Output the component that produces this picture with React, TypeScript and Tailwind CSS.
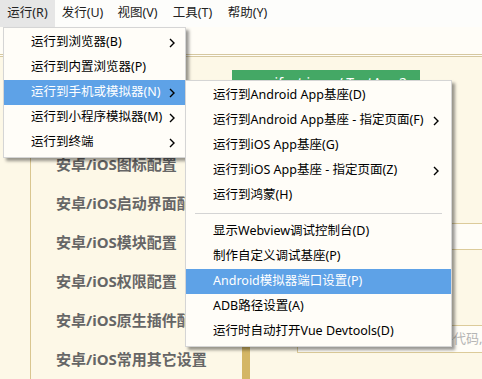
import React from "react";

const FONT = "font-['Noto_Sans','Noto_Sans_CJK_SC',sans-serif]";

function Chevron() {
  return (
    <svg width="6" height="10" viewBox="0 0 6 10" className="text-black">
      <path d="M1 1l4 4-4 4" fill="none" stroke="currentColor" strokeWidth="1.4" />
    </svg>
  );
}

type Item = { label: string; sub?: boolean; active?: boolean; sep?: boolean };

const runMenu: Item[] = [
  { label: "运行到浏览器(B)", sub: true },
  { label: "运行到内置浏览器(P)" },
  { label: "运行到手机或模拟器(N)", sub: true, active: true },
  { label: "运行到小程序模拟器(M)", sub: true },
  { label: "运行到终端", sub: true },
];

const phoneMenu: Item[] = [
  { label: "运行到Android App基座(D)" },
  { label: "运行到Android App基座 - 指定页面(F)", sub: true },
  { label: "运行到iOS App基座(G)" },
  { label: "运行到iOS App基座 - 指定页面(Z)", sub: true },
  { label: "运行到鸿蒙(H)" },
  { label: "", sep: true },
  { label: "显示Webview调试控制台(D)" },
  { label: "制作自定义调试基座(P)" },
  { label: "Android模拟器端口设置(P)", active: true },
  { label: "ADB路径设置(A)" },
  { label: "运行时自动打开Vue Devtools(D)" },
];

const sideItems = [
  "安卓/iOS图标配置",
  "安卓/iOS启动界面配置",
  "安卓/iOS模块配置",
  "安卓/iOS权限配置",
  "安卓/iOS原生插件配置",
  "安卓/iOS常用其它设置",
];

function Menu({ items, arrowRight, className }: { items: Item[]; arrowRight: string; className: string }) {
  return (
    <div className={`absolute border border-[#d5d5d5] bg-[#fffdf8] py-[2px] shadow-[3px_3px_3px_rgba(0,0,0,0.4)] ${className}`}>
      {items.map((it, i) =>
        it.sep ? (
          <div key={i} className="flex h-[11px] items-center px-[9px]">
            <div className="h-px w-full bg-[#d4d4d4]" />
          </div>
        ) : (
          <div
            key={i}
            className={`relative flex h-[25px] items-center pl-[27px] text-[12.5px] ${
              it.active ? "bg-[#5ea2e7] text-white" : "text-black"
            }`}
          >
            <span className="whitespace-nowrap">{it.label}</span>
            {it.sub && (
              <span className={`absolute top-[8px] ${arrowRight}`}>
                <Chevron />
              </span>
            )}
          </div>
        )
      )}
    </div>
  );
}

export default function App() {
  return (
    <div className={`relative h-[379px] w-[482px] overflow-hidden bg-[#fdf8e7] ${FONT}`}>
      {/* 菜单栏 */}
      <div className="flex h-[27px] bg-[#fdfdfb] text-[12.5px] text-[#222]">
        {["运行(R)", "发行(U)", "视图(V)", "工具(T)", "帮助(Y)"].map((m, i) => (
          <div
            key={m}
            className={`flex w-[55px] shrink-0 items-center justify-center ${i === 0 ? "bg-[#e6e6e6]" : ""}`}
          >
            {m}
          </div>
        ))}
      </div>

      {/* 工具栏空白区 */}
      <div className="h-[30px] border-b-[3px] border-double border-[#d6c8a0] bg-[#fffdf7]" />

      {/* 主体 */}
      <div className="flex h-[322px]">
        <div className="w-[31px] shrink-0 border-r border-[#d9c690]" />

        {/* 左侧配置目录 (上面两项被菜单挡住) */}
        <div className="w-[201px] shrink-0 pt-[88px]">
          {sideItems.map((s) => (
            <div key={s} className="flex h-[39px] items-center whitespace-nowrap pl-[25px] text-[15px] font-bold text-[#666]">
              {s}
            </div>
          ))}
        </div>

        <div className="flex min-w-0 flex-1 flex-col">
          <div className="mt-[13px] flex h-[30px] w-[188px] shrink-0 items-center justify-center bg-[#44a865] pb-[6px] text-[14px] text-white">
            manifest.json / TestApp2
          </div>

          <div className="ml-[10px] mt-[115px] flex flex-1 flex-col border-l-8 border-[#d4b665] pl-[47px] pt-[8px]">
            <div className="h-[27px] shrink-0 border border-r-0 border-[#dccb9a] bg-[#fffdf7]" />
            <div className="mt-[75px] flex h-[28px] shrink-0 items-center overflow-hidden whitespace-nowrap border border-r-0 border-[#dccb9a] bg-[#fffdf7] pl-[12px] text-[13px] text-[#b5b5b5]">
              填写需要使用的原生插件代码,多个
            </div>
          </div>
        </div>
      </div>

      <Menu items={runMenu} arrowRight="right-[10px]" className="left-[3px] top-[27px] w-[183px]" />
      <Menu items={phoneMenu} arrowRight="right-[12px]" className="left-[185px] top-[80px] w-[267px]" />
    </div>
  );
}
